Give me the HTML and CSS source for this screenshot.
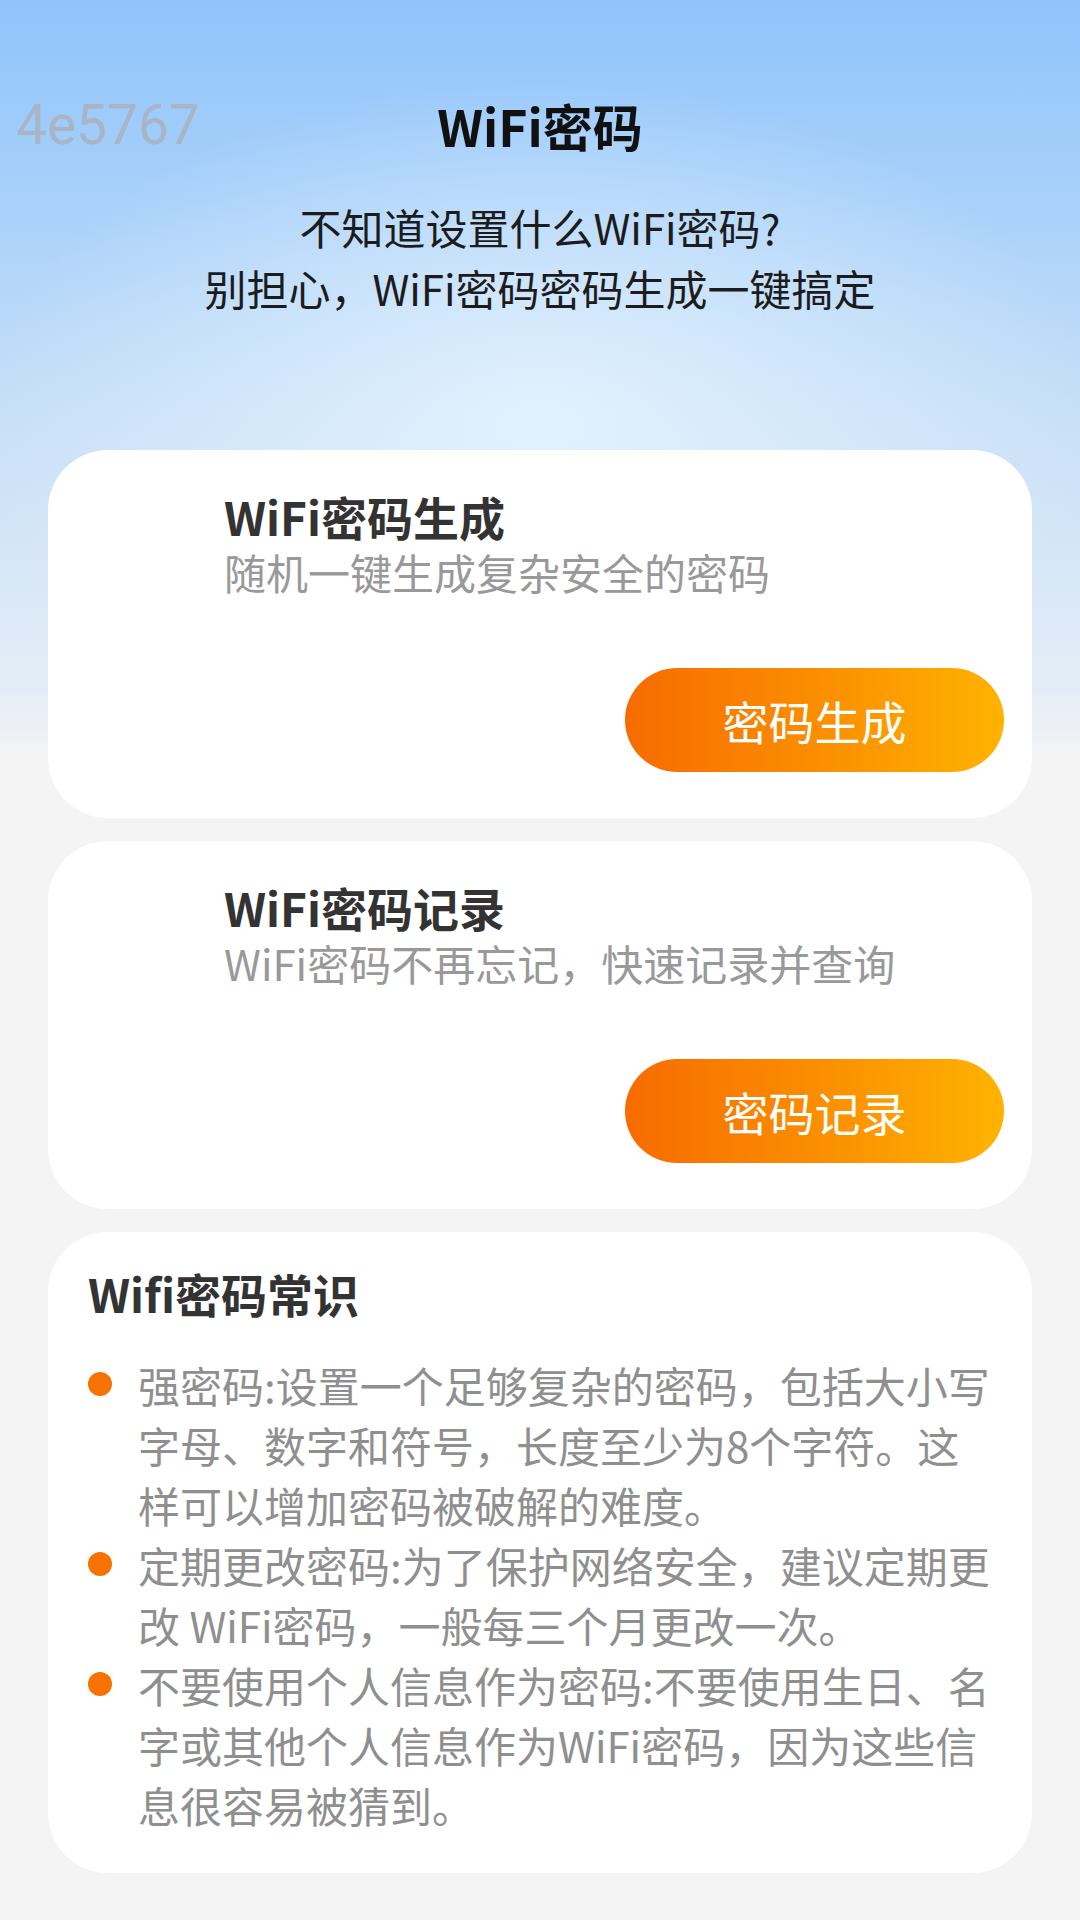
FILE: index.html
```html
<!DOCTYPE html>
<html lang="zh-CN">
<head>
<meta charset="utf-8">
<title>WiFi密码</title>
<link rel="stylesheet" href="styles.css">
</head>
<body>
<header class="top">
  <div class="top-row">
    <span class="tag">4e5767</span>
    <h1 class="page-title">WiFi密码</h1>
    <span class="top-spacer"></span>
  </div>
  <p class="intro">不知道设置什么WiFi密码?<br>别担心，WiFi密码密码生成一键搞定</p>
</header>
<main class="cards">
  <section class="card feature">
    <h2 class="feature-title">WiFi密码生成</h2>
    <p class="feature-desc">随机一键生成复杂安全的密码</p>
    <div class="feature-actions"><button class="btn">密码生成</button></div>
  </section>
  <section class="card feature">
    <h2 class="feature-title">WiFi密码记录</h2>
    <p class="feature-desc">WiFi密码不再忘记，快速记录并查询</p>
    <div class="feature-actions"><button class="btn">密码记录</button></div>
  </section>
  <section class="card tips">
    <h2 class="tips-title">Wifi密码常识</h2>
    <ul class="tips-list">
      <li><span class="tip-text">强密码:设置一个足够复杂的密码，包括大小写字母、数字和符号，长度至少为8个字符。这样可以增加密码被破解的难度。</span></li>
      <li><span class="tip-text">定期更改密码:为了保护网络安全，建议定期更改 WiFi密码，一般每三个月更改一次。</span></li>
      <li><span class="tip-text">不要使用个人信息作为密码:不要使用生日、名字或其他个人信息作为WiFi密码，因为这些信息很容易被猜到。</span></li>
    </ul>
  </section>
</main>
</body>
</html>
```
FILE: styles.css
```css
html {
  background: #f4f4f4;
}
body {
  margin: 0;
  min-height: 1920px;
  padding-top: 90px;
  box-sizing: border-box;
  font-family: "Noto Sans CJK SC", "Noto Sans", sans-serif;
  text-spacing-trim: space-all;
  background-color: #f4f4f4;
  background-image:
    radial-gradient(ellipse 560px 340px at 540px 420px, rgba(230, 244, 255, 0.85) 0%, rgba(230, 244, 255, 0) 100%),
    linear-gradient(180deg, #90c4fb 0px, #a8d0fa 200px, #c5def7 400px, #e4edf7 690px, #f4f4f4 760px);
  background-size: 100% 760px, 100% 760px;
  background-repeat: no-repeat;
}
.top-row {
  display: grid;
  grid-template-columns: 1fr auto 1fr;
  align-items: center;
  height: 70px;
}
.tag {
  padding-left: 16px;
  font-family: Roboto, "Liberation Sans", sans-serif;
  font-size: 55px;
  line-height: 70px;
  color: #a7b5c4;
}
.page-title {
  margin: 0;
  font-size: 50px;
  line-height: 70px;
  font-weight: 700;
  color: #111;
}
.intro {
  margin: 36px 0 0;
  text-align: center;
  font-size: 42px;
  line-height: 61px;
  color: #1c1c1c;
}
.cards {
  margin-top: 132px;
  padding: 0 48px;
  display: flex;
  flex-direction: column;
  gap: 23px;
}
.card {
  background: #fff;
  border-radius: 60px;
}
.feature {
  padding: 38px 28px 46px 176px;
}
.feature-title {
  margin: 0;
  font-size: 46px;
  line-height: 56px;
  font-weight: 700;
  color: #333;
}
.feature-desc {
  margin: 0;
  font-size: 42px;
  line-height: 56px;
  color: #999;
}
.feature-actions {
  margin-top: 68px;
  display: flex;
  justify-content: flex-end;
}
.btn {
  width: 379px;
  height: 104px;
  border: none;
  border-radius: 52px;
  background: linear-gradient(90deg, #f76b00 0%, #fb9100 55%, #ffb300 100%);
  color: #fff;
  font-family: "Noto Sans CJK SC", sans-serif;
  font-size: 46px;
  padding: 0;
}
.tips {
  padding: 31px 38px 38px 40px;
}
.tips-title {
  margin: 0;
  font-size: 46px;
  line-height: 60px;
  font-weight: 700;
  color: #333;
}
.tips-list {
  margin: 32px 0 0;
  padding: 0;
  list-style: none;
}
.tips-list li {
  display: flex;
  gap: 26px;
  font-size: 42px;
  line-height: 60px;
  color: #8f8f8f;
}
.tips-list li::before {
  content: "";
  flex: none;
  width: 24px;
  height: 24px;
  margin-top: 17px;
  border-radius: 50%;
  background: #f77200;
}
.tip-text {
  flex: 1;
}
```
